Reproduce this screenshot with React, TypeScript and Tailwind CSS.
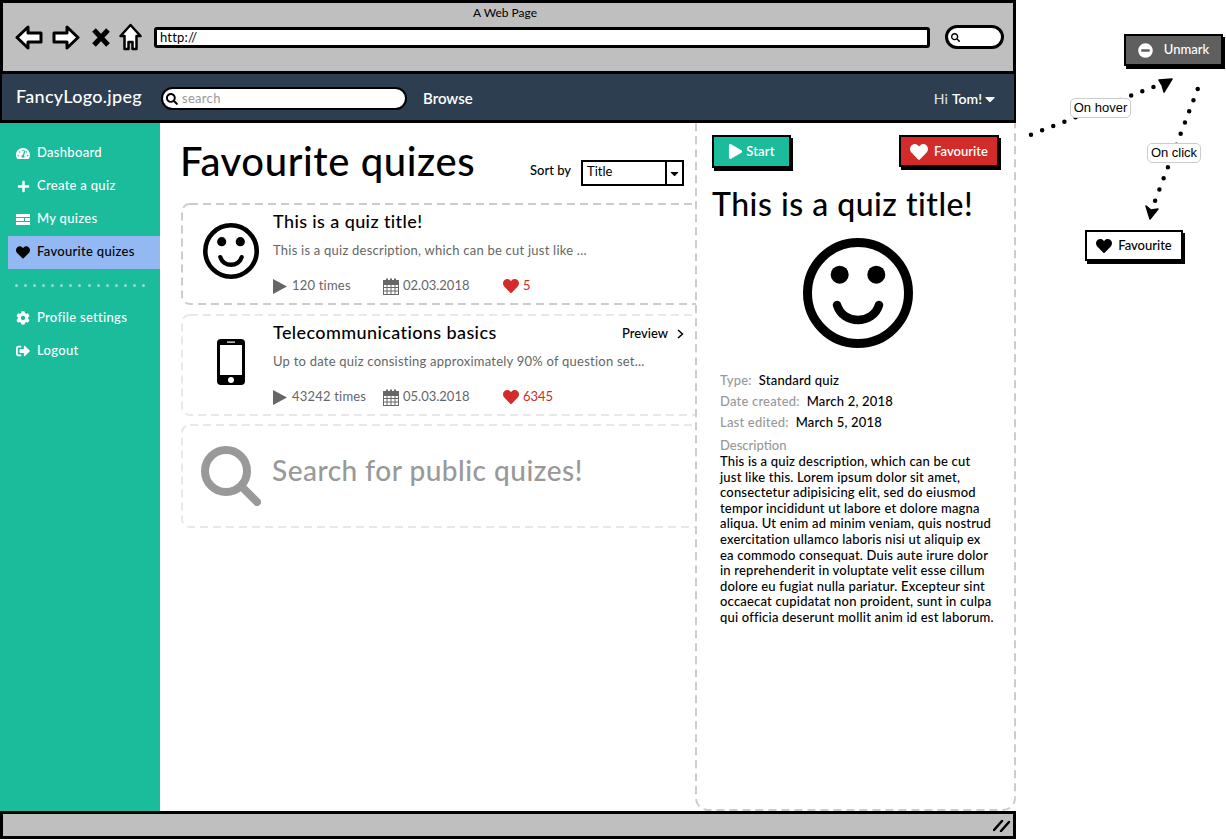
import React from "react";
import { FaTachometerAlt, FaPlus, FaHeart, FaCog, FaSignOutAlt, FaSearch, FaPlay, FaMinusCircle, FaCaretDown } from "react-icons/fa";

const font = { fontFamily: "Lato, 'Noto Sans', sans-serif" };

function Dashed({ color, radius = 8, left = 0, top = 0, open }: { color: string; radius?: number; left?: number; top?: number; open?: boolean }) {
  return (
    <svg className="absolute inset-0 w-full h-full pointer-events-none overflow-hidden">
      <rect
        x={1 + left}
        y={1 + top}
        rx={radius}
        fill="none"
        stroke={color}
        strokeWidth="2"
        strokeDasharray="8 5"
        style={{ width: open ? "calc(100% + 20px)" : `calc(100% - ${2 + left}px)`, height: `calc(100% - ${2 + top}px)` }}
      />
    </svg>
  );
}

function Smile({ size }: { size: number }) {
  return (
    <svg width={size} height={size} viewBox="0 0 110 110">
      <circle cx="55" cy="55" r="50.500" fill="none" stroke="#000" strokeWidth="9" />
      <circle cx="36.700" cy="36.700" r="9" />
      <circle cx="73.300" cy="36.700" r="9" />
      <path d="M34 67c3 10 12 15 21 15s18-5 21-15" fill="none" stroke="#000" strokeWidth="8.500" strokeLinecap="round" />
    </svg>
  );
}

function Calendar() {
  return (
    <svg width="16" height="17" viewBox="0 0 16 17" fill="none" stroke="#666" strokeWidth="1">
      <rect x="0.5" y="2.5" width="15" height="14" />
      <path d="M0 6.5h16M0 9.5h16M0 13h16M4 6v11M8 6v11M12 6v11" />
      <path d="M4 0.5v4M8 0.5v4M12 0.5v4" strokeWidth="2" />
      <path d="M0.5 4.5h15" strokeWidth="3" />
    </svg>
  );
}

function TasksIcon() {
  return (
    <svg width="14" height="11" viewBox="0 0 14 11" fill="#fff">
      <rect width="14" height="3" />
      <rect y="4" width="8" height="3" />
      <rect x="9" y="4" width="5" height="3" />
      <rect y="8" width="14" height="3" />
    </svg>
  );
}

function Nav({ icon, label, active }: { icon: React.ReactNode; label: string; active?: boolean }) {
  return (
    <div className={`h-[33px] flex items-center ml-2 pl-2 pb-px gap-[7px] text-[13px] tracking-[0.3px] font-medium ${active ? "bg-[#94b9f2] text-black" : "text-white"}`}>
      <span className="w-[14px] flex justify-center">{icon}</span>
      <span>{label}</span>
    </div>
  );
}

function Stats({ times, date, likes }: { times: string; date: string; likes: string }) {
  return (
    <div className="flex items-center text-[13px] text-[#666] h-5">
      <svg width="14" height="15" viewBox="0 0 14 15" fill="#666"><path d="M0 0l14 7.500L0 15z" /></svg>
      <span className="ml-[5px] w-[91px] tracking-[0.2px]">{times}</span>
      <Calendar />
      <span className="ml-[4px] w-[100px]">{date}</span>
      <FaHeart className="text-[#d32a2a] text-[16px]" />
      <span className="ml-1 text-[#d32a2a]">{likes}</span>
    </div>
  );
}

function Card({ color, icon, title, desc, children, h, preview }: { color: string; icon: React.ReactNode; title: string; desc: string; children: React.ReactNode; h: string; preview?: boolean }) {
  return (
    <div className={`relative flex ${h}`}>
      <Dashed color={color} open />
      <div className="w-[92px] flex justify-center items-center pb-[7px] shrink-0 pl-[7px]">{icon}</div>
      <div className="flex-1 pt-[6px] pr-[12px]">
        <div className="flex items-center justify-between h-6">
          <span className="text-[18px] tracking-[0.4px] font-medium text-black">{title}</span>
          {preview && (
            <span className="text-[13px] font-medium text-black flex items-center gap-[9px] pt-[4px]">
              Preview
              <svg width="7" height="10" viewBox="0 0 7 10" fill="none" stroke="#000" strokeWidth="1.5"><path d="M1 1l4.500 4-4.500 4" /></svg>
            </span>
          )}
        </div>
        <div className="mt-[7px] text-[13px] tracking-[0.23px] text-[#666] whitespace-nowrap h-5 leading-5">{desc}</div>
        <div className="mt-[16px]">{children}</div>
      </div>
    </div>
  );
}

const lines = [
  "This is a quiz description, which can be cut",
  "just like this. Lorem ipsum dolor sit amet,",
  "consectetur adipisicing elit, sed do eiusmod",
  "tempor incididunt ut labore et dolore magna",
  "aliqua. Ut enim ad minim veniam, quis nostrud",
  "exercitation ullamco laboris nisi ut aliquip ex",
  "ea commodo consequat. Duis aute irure dolor",
  "in reprehenderit in voluptate velit esse cillum",
  "dolore eu fugiat nulla pariatur. Excepteur sint",
  "occaecat cupidatat non proident, sunt in culpa",
  "qui officia deserunt mollit anim id est laborum.",
];

function Meta({ k, v, gap }: { k: string; v: string; gap: string }) {
  return (
    <div className="h-[21px] flex items-center text-[13px] tracking-[0.2px] font-medium whitespace-nowrap">
      <span className="text-[#999]">{k}</span>
      <span className={`text-black ${gap}`}>{v}</span>
    </div>
  );
}

export default function App() {
  return (
    <div className="relative w-[1226px] h-[840px] bg-white overflow-hidden" style={font}>
      <div className="w-[1016px] h-[839px] flex flex-col">
        {/* browser chrome */}
        <div className="h-[74px] shrink-0 bg-[#bfbfbf] border-[3px] border-black flex flex-col">
          <div className="text-[12px] text-center text-black h-[18px] leading-[20px] pr-[6px]">A Web Page</div>
          <div className="flex items-center pl-[12px] mt-[2px]">
            <svg width="28" height="25" viewBox="0 0 28 25" fill="#fff" stroke="#000" strokeWidth="3" strokeLinejoin="round"><path d="M2 12.500L13 2v6h13v9H13v6z" /></svg>
            <svg width="28" height="25" viewBox="0 0 28 25" fill="#fff" stroke="#000" strokeWidth="3" strokeLinejoin="round" className="ml-[9px]"><path d="M26 12.500L15 2v6H2v9h13v6z" /></svg>
            <svg width="18" height="19" viewBox="0 0 18 19" className="ml-[12px]" stroke="#000" strokeWidth="5"><path d="M2 2l14 15M16 2L2 17" /></svg>
            <svg width="23" height="28" viewBox="0 0 23 28" fill="#fff" stroke="#000" strokeWidth="2.500" strokeLinejoin="round" className="ml-[9px]"><path d="M11.500 2L21.500 13h-4v13h-4v-7h-4v7h-4V13h-4z" /></svg>
            <div className="ml-[12px] w-[776px] h-[21px] bg-white border-[3px] border-black rounded-[3px] flex items-center pl-[3px] text-[13px] tracking-[0.2px] text-black leading-none">http://</div>
            <div className="ml-[15px] w-[59px] h-[24px] bg-white border-[3px] border-black rounded-full flex items-center pl-[3px]">
              <FaSearch className="text-[9px] text-black" />
            </div>
          </div>
        </div>
        {/* app nav */}
        <div className="h-[49px] shrink-0 bg-[#2d3e50] border-x-[2px] border-b-[3px] border-black flex items-center pl-[14px] pr-[16px] pt-[3px] text-white">
          <span className="text-[18px] tracking-[0.3px] font-medium w-[145px] pb-[5px]">FancyLogo.jpeg</span>
          <div className="w-[246px] h-[23px] bg-white border-[2px] border-black rounded-full flex items-center pl-[3px] gap-[4px]">
            <FaSearch className="text-[12px] text-black" />
            <span className="text-[13px] tracking-[0.3px] text-[#999]">search</span>
          </div>
          <span className="ml-[16px] text-[15px] font-semibold">Browse</span>
          <span className="ml-auto flex items-center text-[14px] font-medium">
            <span className="text-[#ddd]">Hi</span>
            <span className="ml-1 font-semibold">Tom!</span>
            <FaCaretDown className="text-[16px]" />
          </span>
        </div>
        {/* body */}
        <div className="flex-1 flex min-h-0">
          <aside className="w-[160px] shrink-0 bg-[#1abc9c] pt-[14px]">
            <Nav icon={<FaTachometerAlt className="text-[15px]" />} label="Dashboard" />
            <Nav icon={<FaPlus className="text-[13px]" />} label="Create a quiz" />
            <Nav icon={<TasksIcon />} label="My quizes" />
            <Nav icon={<FaHeart className="text-[15px] text-black" />} label="Favourite quizes" active />
            <div className="mt-[15px] mb-[15px] mx-[15px] h-[3px] w-[130px] flex justify-between">
              {Array.from({ length: 15 }).map((_, i) => (
                <span key={i} className="w-[3px] h-[3px] rounded-full bg-[#8fdfcf]" />
              ))}
            </div>
            <Nav icon={<FaCog className="text-[14px]" />} label="Profile settings" />
            <Nav icon={<FaSignOutAlt className="text-[14px]" />} label="Logout" />
          </aside>
          <main className="w-[536px] shrink-0 pl-[21px]">
            <div className="h-[80px] flex items-start relative">
              <h1 className="text-[40px] tracking-[0.6px] -ml-[1px] font-medium text-black leading-none mt-[18px]">Favourite quizes</h1>
              <div className="absolute left-[349px] top-[37px] flex items-center">
                <span className="text-[13px] font-medium text-black w-[51px] mb-[4px]">Sort by</span>
                <div className="w-[103px] h-[26px] border-[2px] border-black flex text-[13px] text-black">
                  <span className="flex-1 pl-[4px] leading-[18px]">Title</span>
                  <span className="w-[17px] border-l-[2px] border-black flex justify-center items-center"><FaCaretDown className="text-[13px]" /></span>
                </div>
              </div>
            </div>
            <div className="flex flex-col">
              <Card color="#cccccc" h="h-[102px]" icon={<Smile size={56} />} title="This is a quiz title!" desc="This is a quiz description, which can be cut just like ...">
                <Stats times="120 times" date="02.03.2018" likes="5" />
              </Card>
              <div className="h-[9px]" />
              <Card color="#e8e8e8" h="h-[102px]" preview icon={
                <svg width="28" height="46" viewBox="0 0 28 46"><rect width="28" height="46" rx="4" /><rect x="3" y="6" width="22" height="30" fill="#fff" /><circle cx="14" cy="41" r="3" fill="#fff" /><rect x="10" y="2.500" width="8" height="1.200" fill="#fff" /></svg>
              } title="Telecommunications basics" desc="Up to date quiz consisting approximately 90% of question set...">
                <Stats times="43242 times" date="05.03.2018" likes="6345" />
              </Card>
              <div className="h-[8px]" />
              <div className="relative h-[104px] flex items-center">
                <Dashed color="#e8e8e8" open />
                <svg width="60" height="60" viewBox="0 0 60 60" className="ml-[20px]" fill="none" stroke="#999" strokeWidth="8" strokeLinecap="round"><circle cx="25" cy="25" r="21" /><path d="M41 41l15 15" /></svg>
                <span className="ml-[11px] mb-[12px] text-[28px] tracking-[0.5px] font-medium text-[#999]">Search for public quizes!</span>
              </div>
            </div>
          </main>
          <section className="relative w-[321px] shrink-0 pl-[17px] pt-[12px] -ml-[1px]">
            <Dashed color="#cccccc" radius={12} top={-14} />
            <div className="flex justify-between pr-[17px]">
              <div className="w-[79px] h-[33px] bg-[#1abc9c] border-[2px] border-black shadow-[2px_3px_0_#000] flex items-center justify-center gap-[3px] text-white text-[13px] tracking-[0.2px] font-semibold">
                <FaPlay className="text-[15px]" /> Start
              </div>
              <div className="w-[100px] h-[32px] bg-[#d32a2a] border-[2px] border-black shadow-[2px_3px_0_#000] flex items-center justify-center gap-[6px] pt-px text-white text-[13px] font-semibold">
                <FaHeart className="text-[18px]" /> Favourite
              </div>
            </div>
            <h2 className="mt-[20px] text-[32px] tracking-[0.5px] font-medium text-black leading-none whitespace-nowrap">This is a quiz title!</h2>
            <div className="mt-[18px] flex justify-center pr-[12px]">
              <Smile size={110} />
            </div>
            <div className="mt-[22px] pl-[8px]">
              <Meta k="Type:" v="Standard quiz" gap="ml-[7px]" />
              <Meta k="Date created:" v="March 2, 2018" gap="ml-[7px]" />
              <Meta k="Last edited:" v="March 5, 2018" gap="ml-[7px]" />
              <div className="text-[13px] text-[#999] font-medium mt-[5px] mb-[1px] leading-[15px]">Description</div>
              <div className="text-[13px] tracking-[0.19px] font-medium text-black leading-[15.600px] whitespace-nowrap">
                {lines.map((l) => (<div key={l}>{l}</div>))}
              </div>
            </div>
          </section>
        </div>
        {/* status */}
        <div className="h-[28px] shrink-0 bg-[#bfbfbf] border-[3px] border-black flex justify-end items-center pr-[2px]">
          <svg width="18" height="14" viewBox="0 0 18 14" stroke="#000" strokeWidth="2.500" strokeLinecap="round"><path d="M1 12l8-9M8 13l8-9" /></svg>
        </div>
      </div>

      {/* annotations */}
      <div className="absolute left-[1124px] top-[34px] w-[99px] h-[32px] bg-[#5f5f5f] border-[2px] border-black shadow-[2px_3px_0_#000] flex items-center justify-center gap-[11px] text-white text-[13px] font-medium">
        <FaMinusCircle className="text-[15px]" /> Unmark
      </div>
      <div className="absolute left-[1085px] top-[230px] w-[98px] h-[31px] bg-white border-[2px] border-black shadow-[2px_3px_0_#000] flex items-center justify-center gap-[6px] text-black text-[13px] font-medium">
        <FaHeart className="text-[16px]" /> Favourite
      </div>
      <svg className="absolute left-[1020px] top-[70px]" width="200" height="160" viewBox="1020 70 200 160" fill="none">
        <path d="M1031 134.700L1157 85.500" stroke="#000" strokeWidth="4.500" strokeLinecap="round" strokeDasharray="0 11.950" />
        <path d="M1159 80L1172 79L1164 92L1162 85z" fill="#000" stroke="#000" strokeWidth="1.500" strokeLinejoin="round" />
        <path d="M1197.700 89L1155 201" stroke="#000" strokeWidth="4.500" strokeLinecap="round" strokeDasharray="0 11.950" />
        <path d="M1146 206L1151 210L1158 209L1150 219z" fill="#000" stroke="#000" strokeWidth="1.500" strokeLinejoin="round" />
      </svg>
      <div className="absolute left-[1070px] top-[98px] h-[20px] w-[61px] flex items-center justify-center bg-white border border-[#ccc] rounded-[5px] text-[13px] text-black" style={{ fontFamily: "'Liberation Sans', sans-serif" }}>On hover</div>
      <div className="absolute left-[1147px] top-[143px] h-[20px] w-[54px] flex items-center justify-center bg-white border border-[#ccc] rounded-[5px] text-[13px] text-black" style={{ fontFamily: "'Liberation Sans', sans-serif" }}>On click</div>
    </div>
  );
}
